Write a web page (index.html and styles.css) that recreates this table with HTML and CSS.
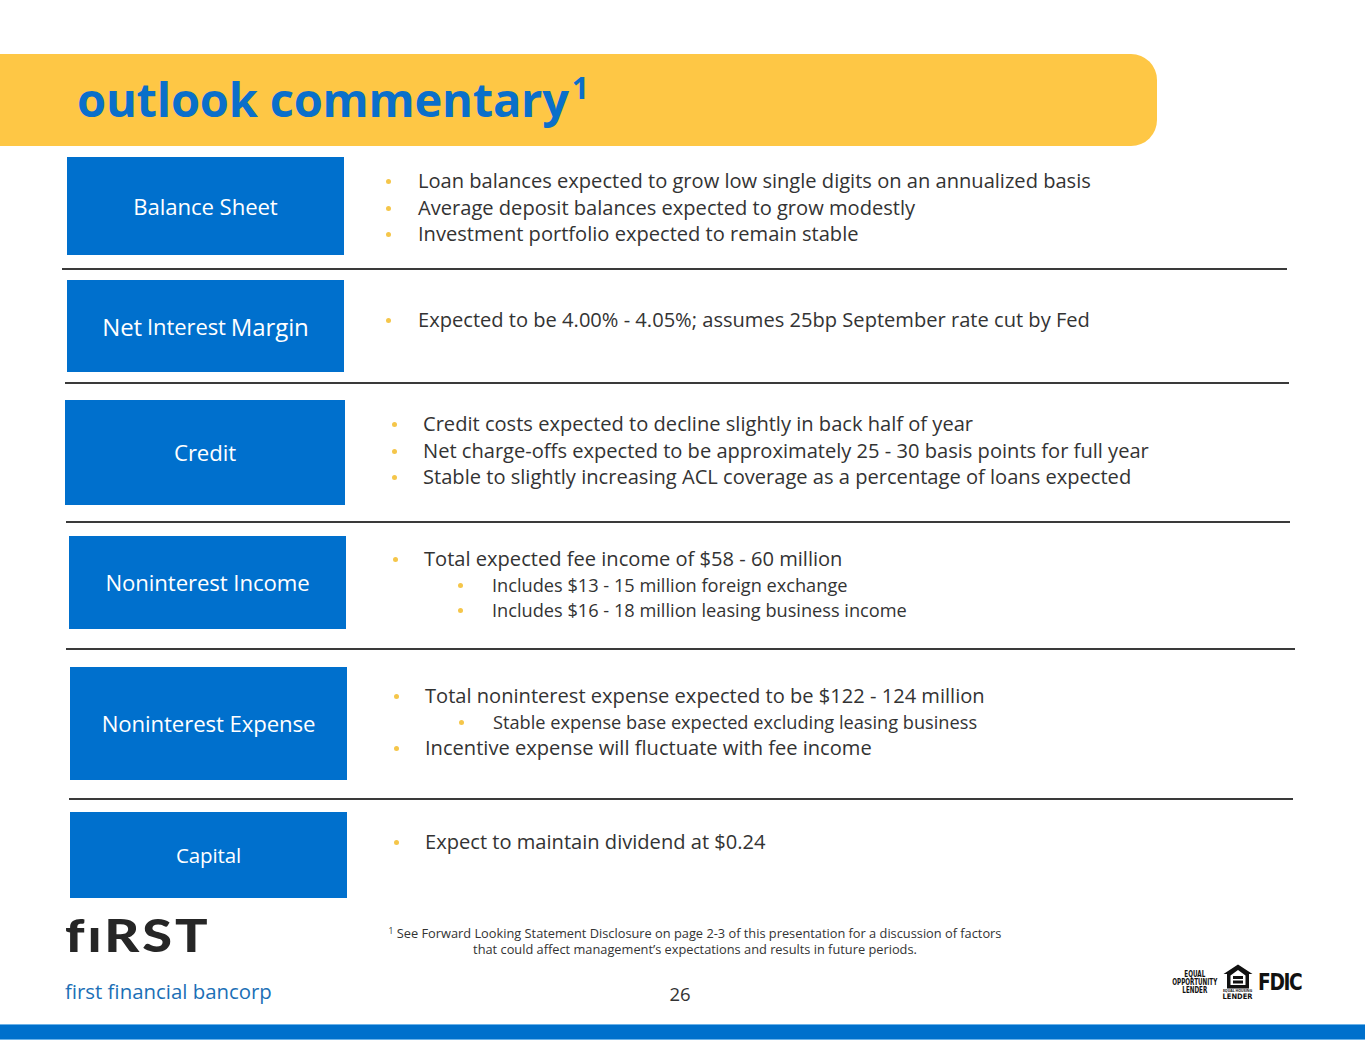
FILE: index.html
```html
<!DOCTYPE html>
<html lang="en">
<head>
<meta charset="utf-8">
<title>outlook commentary</title>
<link rel="stylesheet" href="styles.css">
</head>
<body>
<div class="slide">
  <header class="titlebar">
    <h1 class="title">outlook commentary<sup>1</sup></h1>
  </header>

  <section class="row r1">
    <div class="label">Balance Sheet</div>
    <ul class="items">
      <li>Loan balances expected to grow low single digits on an annualized basis</li>
      <li>Average deposit balances expected to grow modestly</li>
      <li>Investment portfolio expected to remain stable</li>
    </ul>
  </section>
  <div class="rule d1"></div>

  <section class="row r2">
    <div class="label big">Net <span class="small">Interest</span> Margin</div>
    <ul class="items">
      <li>Expected to be 4.00% - 4.05%; assumes 25bp September rate cut by Fed</li>
    </ul>
  </section>
  <div class="rule d2"></div>

  <section class="row r3">
    <div class="label">Credit</div>
    <ul class="items wide">
      <li>Credit costs expected to decline slightly in back half of year</li>
      <li>Net charge-offs expected to be approximately 25 - 30 basis points for full year</li>
      <li>Stable to slightly increasing ACL coverage as a percentage of loans expected</li>
    </ul>
  </section>
  <div class="rule d3"></div>

  <section class="row r4">
    <div class="label">Noninterest Income</div>
    <ul class="items wide">
      <li>Total expected fee income of $58 - 60 million
        <ul class="sub">
          <li>Includes $13 - 15 million foreign exchange</li>
          <li>Includes $16 - 18 million leasing business income</li>
        </ul>
      </li>
    </ul>
  </section>
  <div class="rule d4"></div>

  <section class="row r5">
    <div class="label">Noninterest Expense</div>
    <ul class="items wide">
      <li>Total noninterest expense expected to be $122 - 124 million
        <ul class="sub">
          <li>Stable expense base expected excluding leasing business</li>
        </ul>
      </li>
      <li>Incentive expense will fluctuate with fee income</li>
    </ul>
  </section>
  <div class="rule d5"></div>

  <section class="row r6">
    <div class="label cap">Capital</div>
    <ul class="items wide">
      <li>Expect to maintain dividend at $0.24</li>
    </ul>
  </section>

  <footer class="footer">
    <div class="logo">
      <div class="logo-mark">fıRST</div>
      <div class="logo-name">first financial bancorp</div>
    </div>
    <div class="center">
      <p class="note"><sup>1</sup> See Forward Looking Statement Disclosure on page 2-3 of this presentation for a discussion of factors<br>that could affect management’s expectations and results in future periods.</p>
      <div class="page">26</div>
    </div>
    <div class="badges">
      <div class="eol">EQUAL<br>OPPORTUNITY<br>LENDER</div>
      <div class="ehl">
        <svg width="30" height="25" viewBox="0 0 30 25" aria-hidden="true">
          <path d="M15 0.5 L0.5 10 L4 10 L4 24.5 L26 24.5 L26 10 L29.5 10 Z M7.5 11.5 L15 6 L22.5 11.5 L22.5 21 L7.5 21 Z" fill="#111" fill-rule="evenodd"/>
          <rect x="10" y="12" width="10" height="3" fill="#111"/>
          <rect x="10" y="16.5" width="10" height="3" fill="#111"/>
        </svg>
        <div class="ehl-small">EQUAL HOUSING</div>
        <div class="ehl-big">LENDER</div>
      </div>
      <div class="fdic">FDIC</div>
    </div>
  </footer>
  <div class="bottombar"></div>
</div>
</body>
</html>
```

FILE: styles.css
```css
* { box-sizing: border-box; }
html, body { margin: 0; padding: 0; background: #fff; }
body { font-family: "Open Sans", "Noto Sans", "Liberation Sans", sans-serif; color: #333; }

.slide { width: 1365px; height: 1055px; position: relative; overflow: hidden; padding-top: 54px; }

.titlebar {
  width: 1157px; height: 92px; background: #fec745;
  border-radius: 0 26px 26px 0;
  display: flex; align-items: center; padding-left: 77px;
}
.title {
  margin: 0; font-size: 47px; font-weight: 700; color: #0a6fca;
  letter-spacing: -0.2px; line-height: 1; padding-bottom: 2px;
}
.title sup { font-size: 30px; vertical-align: 0; position: relative; top: -18px; margin-left: 3px; }

.row { display: flex; align-items: flex-start; }
.label {
  flex: none; width: 277px; background: #0070cd; color: #fff;
  display: flex; align-items: center; justify-content: center;
  font-size: 22.2px; font-weight: 400; letter-spacing: -0.1px;
}
.label.big { font-size: 24px; }
.label .small { font-size: 22px; margin: 0 5px; }
.label.cap { font-size: 20.5px; }

.items { list-style: none; margin: 0; padding: 0; font-size: 20.1px; line-height: 26.5px; color: #333; }
.items > li { position: relative; padding-left: 74px; }
.items > li::before, .sub > li::before {
  content: ""; position: absolute; width: 5px; height: 5px; border-radius: 50%;
  background: #f5c64a; left: 42px; top: 11px;
}
.items.wide > li { padding-left: 78px; }
.items.wide > li::before { left: 47px; }
.sub { list-style: none; margin: 0; padding: 0; font-size: 18.2px; line-height: 25px; }
.sub > li { position: relative; padding-left: 68px; }
.sub > li::before { left: 34px; top: 10px; }

.rule { height: 2px; background: #3a3a3a; }

.r1 { margin-top: 11px; margin-left: 67px; }
.r1 .label { height: 98px; }
.r1 .items { padding-top: 11px; }
.d1 { margin-top: 13px; margin-left: 62px; width: 1225px; }

.r2 { margin-top: 10px; margin-left: 67px; }
.r2 .label { height: 92px; }
.r2 .items { padding-top: 27px; }
.d2 { margin-top: 10px; margin-left: 65px; width: 1224px; }

.r3 { margin-top: 16px; margin-left: 65px; }
.r3 .label { height: 105px; width: 280px; }
.r3 .items { padding-top: 11px; }
.d3 { margin-top: 16px; margin-left: 66px; width: 1224px; }

.r4 { margin-top: 13px; margin-left: 69px; }
.r4 .label { height: 93px; }
.r4 .items { padding-top: 10px; }
.d4 { margin-top: 19px; margin-left: 66px; width: 1229px; }

.r5 { margin-top: 17px; margin-left: 70px; }
.r5 .label { height: 113px; }
.r5 .items { padding-top: 16px; }
.d5 { margin-top: 18px; margin-left: 69px; width: 1224px; }

.r6 { margin-top: 12px; margin-left: 70px; }
.r6 .label { height: 86px; }
.r6 .items { padding-top: 17px; }

.footer { display: flex; align-items: flex-start; margin-top: 12px; height: 113px; }
.logo { width: 300px; padding-left: 65px; padding-top: 2px; }
.logo-mark {
  font-family: Lato, "DejaVu Sans", sans-serif; font-weight: 900; font-size: 45px;
  line-height: 46px; color: #262626; letter-spacing: 2.5px;
  font-variant-ligatures: none; font-feature-settings: "liga" 0;
  transform: scaleX(1.2); transform-origin: left center; white-space: nowrap;
}
.logo-name { margin-top: 19px; font-size: 20.4px; font-weight: 400; color: #1b6fb6; letter-spacing: 0; white-space: nowrap; }

.center { width: 780px; text-align: center; padding-top: 13px; }
.note { margin: 0; font-size: 12.8px; line-height: 16px; color: #333; padding-left: 10px; }
.note sup { font-size: 8.5px; vertical-align: 4px; }
.page { margin-top: 24px; font-size: 18.5px; color: #333; padding-right: 20px; }

.badges { display: flex; align-items: flex-start; gap: 4px; margin-top: 54px; margin-left: 92px; }
.eol {
  font-family: "DejaVu Sans Condensed", "Liberation Sans Narrow", sans-serif;
  font-weight: 700; font-size: 8px; line-height: 8px; text-align: center; color: #111;
  transform: scaleX(0.78); margin: 7px -6px 0 -6px;
}
.ehl { display: flex; flex-direction: column; align-items: center; width: 32px; }
.ehl svg { display: block; }
.ehl-small { font-size: 3.5px; line-height: 4px; font-weight: 700; color: #111; white-space: nowrap; }
.ehl-big { font-size: 7.5px; line-height: 8px; font-weight: 700; color: #111; font-family: "DejaVu Sans Condensed", sans-serif; }
.fdic {
  font-family: "DejaVu Sans Condensed", "Liberation Sans Narrow", sans-serif; font-weight: 700;
  font-size: 23px; line-height: 24px; color: #111; letter-spacing: -1.5px; transform: scaleX(0.9);
  transform-origin: left center; margin-top: 6px; margin-left: 0;
}

.bottombar {
  position: absolute; left: 0; top: 1024px; width: 1365px; height: 16px;
  background: #0070cc; border-top: 1px solid #6cb2e8; border-bottom: 1px solid #6cb2e8;
}
```
